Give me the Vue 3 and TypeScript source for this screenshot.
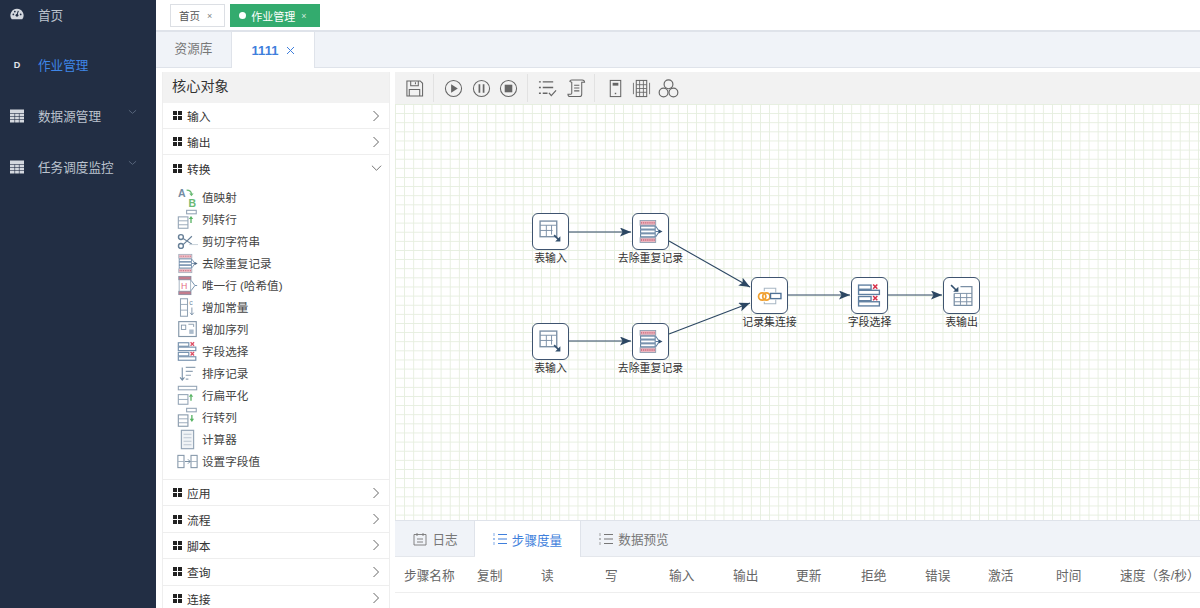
<script setup lang="ts">
interface Step {
  id: number;
  name: string;
  icon: string;
  x: number;
  y: number;
}

const paletteTop = ['输入', '输出'];
const paletteBottom = ['应用', '流程', '脚本', '查询', '连接'];

const transforms = [
  { name: '值映射', icon: 'i-map' },
  { name: '列转行', icon: 'i-col-row' },
  { name: '剪切字符串', icon: 'i-cut' },
  { name: '去除重复记录', icon: 'i-dedupe' },
  { name: '唯一行 (哈希值)', icon: 'i-hash' },
  { name: '增加常量', icon: 'i-const' },
  { name: '增加序列', icon: 'i-seq' },
  { name: '字段选择', icon: 'i-select' },
  { name: '排序记录', icon: 'i-sort' },
  { name: '行扁平化', icon: 'i-flat' },
  { name: '行转列', icon: 'i-row-col' },
  { name: '计算器', icon: 'i-calc' },
  { name: '设置字段值', icon: 'i-setval' }
];

// offsets are relative to the canvas
const steps: Step[] = [
  { id: 1, name: '表输入', icon: 'i-table-in', x: 137, y: 109 },
  { id: 2, name: '去除重复记录', icon: 'i-dedupe', x: 237, y: 109 },
  { id: 3, name: '表输入', icon: 'i-table-in', x: 137, y: 219 },
  { id: 4, name: '去除重复记录', icon: 'i-dedupe', x: 237, y: 219 },
  { id: 5, name: '记录集连接', icon: 'i-join', x: 356, y: 173 },
  { id: 6, name: '字段选择', icon: 'i-select', x: 456, y: 173 },
  { id: 7, name: '表输出', icon: 'i-table-out', x: 548, y: 173 }
];

const hops = [
  [174, 128, 236, 128],
  [174, 237, 236, 237],
  [274, 137, 355, 183],
  [274, 230, 355, 199],
  [393, 191, 455, 191],
  [493, 191, 547, 191]
];

const columns = ['步骤名称', '复制', '读', '写', '输入', '输出', '更新', '拒绝', '错误', '激活', '时间', '速度（条/秒）'];
</script>

<template>
  <div class="page">
    <svg class="defs" width="0" height="0" aria-hidden="true">
      <defs>
        <symbol id="i-map" viewBox="0 0 24 24">
          <text x="1" y="11" font-size="12" font-weight="700" font-family="Liberation Sans, sans-serif" fill="#5b7793">A</text>
          <text x="13" y="23" font-size="12" font-weight="700" font-family="Liberation Sans, sans-serif" fill="#4fae5c">B</text>
          <path d="M11 3.500c4 0 5.500 1.500 5.500 5" fill="none" stroke="#4fae5c" stroke-width="1.500" />
          <path d="M14 7.500h5l-2.500 3z" fill="#4fae5c" />
        </symbol>
        <symbol id="i-col-row" viewBox="0 0 24 24">
          <rect x="11" y="1.500" width="11" height="4" fill="none" stroke="#7f93a8" stroke-width="1.200" />
          <rect x="1.500" y="9" width="11" height="13" fill="none" stroke="#7f93a8" stroke-width="1.200" />
          <path d="M1.500 13.500h11M1.500 18h11" stroke="#7f93a8" />
          <path d="M16 16v-5" stroke="#3aa648" stroke-width="1.500" />
          <path d="M13.500 11.500L16 8l2.500 3.500z" fill="#3aa648" />
        </symbol>
        <symbol id="i-cut" viewBox="0 0 24 24">
          <circle cx="4.500" cy="7" r="2.800" fill="none" stroke="#4d6a86" stroke-width="1.600" />
          <circle cx="4.500" cy="17" r="2.800" fill="none" stroke="#4d6a86" stroke-width="1.600" />
          <path d="M7 8.500L17 15M7 15.500L17 6" stroke="#4d6a86" stroke-width="1.300" />
          <path d="M14 15.500h10" stroke="#b8c4cf" />
        </symbol>
        <symbol id="i-dedupe" viewBox="0 0 24 24">
          <rect x="2" y="1.500" width="15" height="4.500" fill="#eab8c1" stroke="#8a9aad" stroke-width="0.800" />
          <rect x="2" y="18" width="15" height="4.500" fill="#eab8c1" stroke="#8a9aad" stroke-width="0.800" />
          <path d="M3 3.700h13M3 20.200h13" stroke="#c4536a" stroke-width="1.300" stroke-dasharray="1 1" />
          <rect x="2.500" y="6.800" width="14" height="2.900" fill="#fff" stroke="#5d7d9f" />
          <rect x="2.500" y="10.500" width="14" height="2.900" fill="#fff" stroke="#5d7d9f" />
          <rect x="2.500" y="14.200" width="14" height="2.900" fill="#fff" stroke="#5d7d9f" />
          <path d="M17 7l3.500 5L17 17M17 12h4" fill="none" stroke="#5d7d9f" stroke-width="1" />
          <path d="M20 10l3.500 2-3.500 2z" fill="#33506e" />
        </symbol>
        <symbol id="i-hash" viewBox="0 0 24 24">
          <rect x="2" y="1.500" width="14" height="4" fill="#b9667a" stroke="#66788f" stroke-width="0.800" />
          <rect x="2" y="18.500" width="14" height="4" fill="#b9667a" stroke="#66788f" stroke-width="0.800" />
          <path d="M2.500 5.500v13M15.500 5.500v13" stroke="#8ea0b2" />
          <text x="4.500" y="16" font-size="10" font-family="Liberation Sans, sans-serif" fill="#e0566c">H</text>
          <path d="M16 6l4.500 6L16 18M20.500 12H23" fill="none" stroke="#4f7196" />
        </symbol>
        <symbol id="i-const" viewBox="0 0 24 24">
          <rect x="4" y="2" width="8" height="20" fill="none" stroke="#7f93a8" stroke-width="1.200" />
          <path d="M4 8.500h8M4 15h8" stroke="#7f93a8" />
          <text x="14" y="9" font-size="8" font-family="Liberation Sans, sans-serif" fill="#5b7793">c</text>
          <path d="M17 12v8M15 18l2 2.500 2-2.500" fill="none" stroke="#5b7793" />
        </symbol>
        <symbol id="i-seq" viewBox="0 0 24 24">
          <rect x="2" y="3" width="20" height="17" fill="none" stroke="#6e849a" stroke-width="1.300" />
          <rect x="5" y="7" width="5" height="5" fill="none" stroke="#6e849a" />
          <rect x="14" y="12" width="5" height="5" fill="#9db0c2" />
          <path d="M13 6h6v3" fill="none" stroke="#6e849a" />
        </symbol>
        <symbol id="i-select" viewBox="0 0 24 24">
          <rect x="1.500" y="2" width="12" height="4" fill="#fff" stroke="#5d7d9f" stroke-width="1.300" />
          <rect x="1.500" y="7" width="20" height="4" fill="#fff" stroke="#5d7d9f" stroke-width="1.300" />
          <rect x="1.500" y="13" width="12" height="4" fill="#fff" stroke="#5d7d9f" stroke-width="1.300" />
          <rect x="1.500" y="18" width="20" height="4" fill="#fff" stroke="#5d7d9f" stroke-width="1.300" />
          <path d="M15.500 1.500l4 4M19.500 1.500l-4 4M15.500 12.500l4 4M19.500 12.500l-4 4" stroke="#d8304a" stroke-width="1.500" />
        </symbol>
        <symbol id="i-sort" viewBox="0 0 24 24">
          <path d="M6 5v14M3.500 16.500L6 19.500l2.500-3" fill="none" stroke="#5b7793" stroke-width="1.200" />
          <path d="M10 5h11M10 9.500h8M10 14h6M10 18.500h3" stroke="#7f93a8" stroke-width="1.300" />
        </symbol>
        <symbol id="i-flat" viewBox="0 0 24 24">
          <rect x="1.500" y="1.500" width="21" height="4" fill="none" stroke="#7f93a8" stroke-width="1.200" />
          <rect x="1.500" y="11" width="11" height="11" fill="none" stroke="#7f93a8" stroke-width="1.200" />
          <path d="M1.500 16.500h11" stroke="#7f93a8" />
          <path d="M16 18v-5" stroke="#3aa648" stroke-width="1.500" />
          <path d="M13.500 13.500L16 10l2.500 3.500z" fill="#3aa648" />
        </symbol>
        <symbol id="i-row-col" viewBox="0 0 24 24">
          <rect x="11" y="1.500" width="11" height="4" fill="none" stroke="#7f93a8" stroke-width="1.200" />
          <rect x="1.500" y="9" width="11" height="13" fill="none" stroke="#6e849a" stroke-width="1.200" />
          <path d="M1.500 13.500h11M1.500 18h11" stroke="#7f93a8" />
          <path d="M17 9v5" stroke="#3aa648" stroke-width="1.500" />
          <path d="M14.500 13.500L17 17l2.500-3.500z" fill="#3aa648" />
        </symbol>
        <symbol id="i-calc" viewBox="0 0 24 24">
          <rect x="5" y="1.500" width="14" height="21" fill="#eef1f5" stroke="#7f93a8" stroke-width="1.300" />
          <path d="M7.500 6h9M7.500 10h9M7.500 14h9M7.500 18h9" stroke="#a8b6c4" />
        </symbol>
        <symbol id="i-setval" viewBox="0 0 24 24">
          <rect x="1" y="5" width="7" height="14" fill="none" stroke="#6e849a" stroke-width="1.200" />
          <rect x="16" y="5" width="7" height="14" fill="none" stroke="#6e849a" stroke-width="1.200" />
          <path d="M1 12h7M16 12h7" stroke="#8ea0b2" />
          <path d="M9 12h6M12.500 9.500L15 12l-2.500 2.500" fill="none" stroke="#4d6a86" />
        </symbol>
        <symbol id="i-table-in" viewBox="0 0 24 24">
          <rect x="2" y="2" width="16" height="15" fill="#fff" stroke="#7a8fa5" stroke-width="1.300" />
          <path d="M2 6h16M2 11h12M8 6v11M13 6v9" stroke="#7a8fa5" stroke-width="0.900" />
          <path d="M15.500 15.500l4.500 4.500" stroke="#33506e" stroke-width="1.500" />
          <path d="M21.500 16.500v5h-5z" fill="#33506e" />
        </symbol>
        <symbol id="i-table-out" viewBox="0 0 24 24">
          <path d="M11 3.500h11v18H5V10" fill="#fff" stroke="#7a8fa5" stroke-width="1.200" />
          <path d="M5 10h17M5 14h17M5 18h17M11 10v11M17 10v11" stroke="#7a8fa5" stroke-width="0.900" />
          <path d="M2 2l5 5" stroke="#33506e" stroke-width="1.500" />
          <path d="M9 3.500v5H4z" fill="#33506e" />
        </symbol>
        <symbol id="i-join" viewBox="0 0 24 24">
          <circle cx="5" cy="13" r="3.500" fill="none" stroke="#f0a030" stroke-width="1.700" />
          <circle cx="9" cy="13" r="3.500" fill="none" stroke="#f0a030" stroke-width="1.700" />
          <path d="M7 8V5h11v4M7 18v2h11v-4" fill="none" stroke="#a8b6c4" />
          <rect x="13" y="10" width="10" height="5" fill="#fff" stroke="#4f7196" stroke-width="1.300" />
        </symbol>
        <marker id="hop-arrow" markerWidth="12" markerHeight="10" refX="11" refY="4.500" orient="auto" markerUnits="userSpaceOnUse">
          <path d="M0 0L11 4.500L0 9L2.500 4.500z" fill="#2c4763" />
        </marker>
      </defs>
    </svg>

    <aside class="sidebar">
      <div class="nav-item">
        <svg class="nav-icon" viewBox="0 0 16 14">
          <path d="M8 1a7.500 7.500 0 0 0-6 12h12A7.500 7.500 0 0 0 8 1z" fill="#d4d8df" />
          <circle cx="8" cy="8.500" r="1.600" fill="#222e44" />
          <path d="M8 8l1.500-4.500" stroke="#222e44" stroke-width="1.200" />
          <circle cx="3.800" cy="7.500" r="1" fill="#222e44" />
          <circle cx="5.500" cy="4.200" r="1" fill="#222e44" />
          <circle cx="12.200" cy="7.500" r="1" fill="#222e44" />
        </svg>
        <span>首页</span>
      </div>
      <div class="nav-item active">
        <span class="nav-letter">D</span>
        <span>作业管理</span>
      </div>
      <div class="nav-item">
        <svg class="nav-icon" viewBox="0 0 14 14">
          <path d="M0 0.500h14v13H0z" fill="#d4d8df" />
          <path d="M0 4.500h14M0 7.500h14M0 10.500h14M4.700 4.500V14M9.300 4.500V14" stroke="#222e44" stroke-width="0.600" />
        </svg>
        <span>数据源管理</span>
        <svg class="nav-caret" viewBox="0 0 10 6"><path d="M1 1l4 3.500L9 1" /></svg>
      </div>
      <div class="nav-item">
        <svg class="nav-icon" viewBox="0 0 14 14">
          <path d="M0 0.500h14v13H0z" fill="#d4d8df" />
          <path d="M0 4.500h14M0 7.500h14M0 10.500h14M4.700 4.500V14M9.300 4.500V14" stroke="#222e44" stroke-width="0.600" />
        </svg>
        <span>任务调度监控</span>
        <svg class="nav-caret" viewBox="0 0 10 6"><path d="M1 1l4 3.500L9 1" /></svg>
      </div>
    </aside>

    <main class="main">
      <div class="tags">
        <div class="tag">首页<span class="tag-x">×</span></div>
        <div class="tag tag-on"><i class="tag-dot"></i>作业管理<span class="tag-x">×</span></div>
      </div>

      <div class="tabs">
        <div class="tab">资源库</div>
        <div class="tab tab-on">
          1111
          <svg class="tab-x" viewBox="0 0 9 9"><path d="M1 1l7 7M8 1L1 8" /></svg>
        </div>
      </div>

      <div class="workspace">
        <section class="palette">
          <h3 class="palette-head">核心对象</h3>
          <div v-for="g in paletteTop" :key="g" class="group">
            <svg class="grip" viewBox="0 0 9 9"><path d="M0 0h4v4H0zM5 0h4v4H5zM0 5h4v4H0zM5 5h4v4H5z" /></svg>
            <span>{{ g }}</span>
            <svg class="chev" viewBox="0 0 8 12"><path d="M1.500 1l5 5-5 5" /></svg>
          </div>
          <div class="group group-open">
            <svg class="grip" viewBox="0 0 9 9"><path d="M0 0h4v4H0zM5 0h4v4H5zM0 5h4v4H0zM5 5h4v4H5z" /></svg>
            <span>转换</span>
            <svg class="chev-down" viewBox="0 0 12 8"><path d="M1 1.500l5 5 5-5" /></svg>
          </div>
          <ul class="items">
            <li v-for="t in transforms" :key="t.name" class="item">
              <svg class="item-icon"><use :href="`#${t.icon}`" /></svg>
              <span>{{ t.name }}</span>
            </li>
          </ul>
          <div v-for="g in paletteBottom" :key="g" class="group group-low">
            <svg class="grip" viewBox="0 0 9 9"><path d="M0 0h4v4H0zM5 0h4v4H5zM0 5h4v4H0zM5 5h4v4H5z" /></svg>
            <span>{{ g }}</span>
            <svg class="chev" viewBox="0 0 8 12"><path d="M1.500 1l5 5-5 5" /></svg>
          </div>
        </section>

        <section class="editor">
          <div class="toolbar">
            <div class="tool-group tg-save">
              <svg class="tool" viewBox="0 0 20 20">
                <path d="M2 2h14l2.500 2.500V18H2z" />
                <path d="M6 2v5h8V2M4.500 18v-7h11v7M11 3.500v2" />
              </svg>
            </div>
            <div class="tool-group tg-run">
              <svg class="tool" viewBox="0 0 20 20"><circle cx="10" cy="10" r="8.500" /><path class="fill" d="M7.500 5.500l7 4.500-7 4.500z" /></svg>
              <svg class="tool" viewBox="0 0 20 20"><circle cx="10" cy="10" r="8.500" /><path d="M7.800 5.500v9M12.200 5.500v9" stroke-width="1.800" /></svg>
              <svg class="tool" viewBox="0 0 20 20"><circle cx="10" cy="10" r="8.500" /><path class="fill" d="M6 6h8v8H6z" /></svg>
            </div>
            <div class="tool-group tg-check">
              <svg class="tool" viewBox="0 0 20 20">
                <path d="M1 3h2M5 3h11M1 9h2M5 9h11M1 15h2M5 15h5" stroke-width="1.500" />
                <path d="M11.500 14.500l2.500 3 5-5.500" stroke-width="1.300" />
              </svg>
              <svg class="tool" viewBox="0 0 20 20">
                <path d="M3 2.500c0-1 1-1.500 2-1.500h11c1.500 0 2.500 1 2.500 2.500h-3V16c0 1.500-1 2.500-2.500 2.500H3.500C2 18.500 1 17.500 1 16h3c.5 0 1-.5 1-1V3.500z" />
                <path d="M7.500 6.500h5.500M7.500 9.500h5.500M7.500 12.500h5.500" />
              </svg>
            </div>
            <div class="tool-group tg-misc">
              <svg class="tool" viewBox="0 0 20 20">
                <rect x="4.500" y="1.500" width="11" height="17" />
                <path class="fill" d="M7 4h6v3H7z" />
                <path d="M10 14.500v1.500" stroke-width="1.500" />
              </svg>
              <svg class="tool" viewBox="0 0 20 20">
                <rect x="4.500" y="1.500" width="11" height="17" />
                <path d="M1.500 4v12M18.500 4v12M8 1.500v17M12 1.500v17M4.500 6h11M4.500 10h11M4.500 14h11" stroke-width="0.900" />
              </svg>
              <svg class="tool tool-wide" viewBox="0 0 20 20">
                <circle cx="10" cy="6" r="4.200" />
                <circle cx="5.300" cy="13.800" r="4.200" />
                <circle cx="14.700" cy="13.800" r="4.200" />
              </svg>
            </div>
          </div>

          <div class="canvas">
            <svg class="hops">
              <line
                v-for="(h, i) in hops"
                :key="i"
                :x1="h[0]"
                :y1="h[1]"
                :x2="h[2]"
                :y2="h[3]"
                stroke="#2c4763"
                stroke-width="1.100"
                marker-end="url(#hop-arrow)"
              />
            </svg>
            <div
              v-for="s in steps"
              :key="s.id"
              class="step"
              :style="{ left: `${s.x}px`, top: `${s.y}px` }"
            >
              <div class="step-box"><svg class="step-icon"><use :href="`#${s.icon}`" /></svg></div>
              <div class="step-name">{{ s.name }}</div>
            </div>
          </div>

          <div class="bottom">
            <div class="bottom-tabs">
              <div class="btab btab-log">
                <svg class="btab-icon" viewBox="0 0 14 14">
                  <path d="M1 2.500h12v10.500H1zM4 1v3M10 1v3M4 7h6M4 10h6" fill="none" stroke="currentColor" stroke-width="0.900" />
                </svg>
                日志
              </div>
              <div class="btab btab-on">
                <svg class="btab-icon" viewBox="0 0 14 14">
                  <path d="M5 2.500h9M5 7h9M5 11.500h9" fill="none" stroke="currentColor" stroke-width="1.100" />
                  <path d="M1 1.500v2M1 6v2M1 10.500v2" fill="none" stroke="currentColor" stroke-width="1.300" stroke-dasharray="0.800 0.500" />
                </svg>
                步骤度量
              </div>
              <div class="btab">
                <svg class="btab-icon" viewBox="0 0 14 14">
                  <path d="M5 2.500h9M5 7h9M5 11.500h9" fill="none" stroke="currentColor" stroke-width="1.100" />
                  <path d="M1 1.500v2M1 6v2M1 10.500v2" fill="none" stroke="currentColor" stroke-width="1.300" stroke-dasharray="0.800 0.500" />
                </svg>
                数据预览
              </div>
            </div>
            <div class="metrics">
              <div v-for="c in columns" :key="c" class="metric">{{ c }}</div>
            </div>
          </div>
        </section>
      </div>
    </main>
  </div>
</template>

<style>
html,
body {
  margin: 0;
  overflow: hidden;
}
</style>

<style scoped>
.page {
  display: flex;
  width: 1200px;
  height: 608px;
  overflow: hidden;
  background: #fff;
  font-family: "Liberation Sans", "Noto Sans CJK SC", sans-serif;
  color: #333;
}

.defs {
  position: absolute;
}

/* sidebar */
.sidebar {
  flex: none;
  width: 156px;
  background: #222e44;
  color: #bcc3ce;
  font-size: 12.6px;
}

.nav-item {
  display: flex;
  align-items: center;
  height: 51px;
  padding-left: 10px;
  position: relative;
}

.nav-item:first-child {
  height: 28px;
  margin-bottom: 11px;
}

.nav-item.active {
  color: #3f86e8;
}

.nav-icon {
  width: 14px;
  height: 14px;
  margin-right: 14px;
}

.nav-letter {
  width: 14px;
  margin-right: 14px;
  font-size: 9px;
  font-weight: 700;
  color: #e4e7ec;
  text-align: center;
}

.nav-caret {
  position: absolute;
  left: 128px;
  top: 19px;
  width: 9px;
  height: 6px;
  fill: none;
  stroke: #5c6a80;
}

/* tag bar */
.main {
  flex: 1;
  min-width: 0;
  display: flex;
  flex-direction: column;
}

.tags {
  flex: none;
  display: flex;
  gap: 5px;
  height: 32px;
  padding: 4px 0 0 14px;
  box-sizing: border-box;
  border-bottom: 2px solid #dfe3ea;
}

.tag {
  height: 23px;
  box-sizing: border-box;
  display: flex;
  align-items: center;
  padding: 0 12px 0 8px;
  border: 1px solid #dcdfe4;
  font-size: 10.5px;
  color: #555;
}

.tag-on {
  padding-right: 12px;
  background: #33ab6e;
  border-color: #33ab6e;
  color: #fff;
  font-size: 11px;
}

.tag-dot {
  width: 7px;
  height: 7px;
  border-radius: 50%;
  background: #fff;
  margin-right: 5px;
}

.tag-x {
  margin-left: 7px;
  font-size: 9px;
  opacity: 0.75;
}

.tag-on .tag-x {
  margin-left: 6px;
}

/* page tabs */
.tabs {
  flex: none;
  display: flex;
  height: 36px;
  background: #f0f3f8;
  border-bottom: 1px solid #dfe3ea;
  box-sizing: border-box;
}

.tab {
  width: 75px;
  line-height: 35px;
  text-align: center;
  font-size: 12.6px;
  color: #777;
  border-right: 1px solid #dfe3ea;
}

.tab-on {
  display: flex;
  align-items: center;
  justify-content: center;
  gap: 8px;
  width: 83px;
  height: 36px;
  box-sizing: border-box;
  padding-left: 1px;
  background: #fff;
  color: #3f7fdc;
  font-weight: 700;
  font-size: 13px;
}

.tab-x {
  width: 9px;
  height: 9px;
  fill: none;
  stroke: #3f7fdc;
  stroke-width: 1;
}

/* workspace */
.workspace {
  flex: 1;
  min-height: 0;
  display: flex;
  gap: 5px;
  padding: 4px 0 0 6px;
  overflow: hidden;
}

.palette {
  flex: none;
  width: 228px;
  border-left: 1px solid #eee;
  border-right: 1px solid #eee;
  box-sizing: border-box;
}

.palette-head {
  margin: 0;
  height: 31px;
  line-height: 29px;
  padding-left: 9px;
  font-size: 14.2px;
  font-weight: 400;
  color: #333;
  background: #f2f2f2;
}

.group {
  display: flex;
  align-items: center;
  height: 26px;
  padding-left: 10px;
  font-size: 11.8px;
  color: #333;
  border-bottom: 1px solid #eee;
  box-sizing: border-box;
}

.group-low {
  height: 26.4px;
}

.group-open {
  border-bottom: 0;
}

.grip {
  width: 9px;
  height: 9px;
  margin-right: 5px;
  fill: #222;
}

.chev,
.chev-down {
  margin-left: auto;
  fill: none;
  stroke: #666;
}

.chev {
  width: 8px;
  height: 12px;
  margin-right: 9px;
}

.chev-down {
  width: 11px;
  height: 8px;
  margin-right: 7px;
}

.items {
  list-style: none;
  margin: 0;
  padding: 5px 0 7px 14px;
  border-bottom: 1px solid #eee;
}

.item {
  display: flex;
  align-items: center;
  height: 22px;
  font-size: 11.6px;
  color: #444;
}

.item-icon {
  flex: none;
  width: 21px;
  height: 21px;
  margin-right: 4px;
  opacity: 0.85;
}

/* editor */
.editor {
  flex: 1;
  min-width: 0;
  display: flex;
  flex-direction: column;
}

.toolbar {
  flex: none;
  display: flex;
  height: 32px;
  background: #f2f2f2;
}

.tool-group {
  display: flex;
  align-items: center;
  height: 28px;
  margin-top: 2px;
  border-right: 1px solid #e2e2e2;
  box-sizing: border-box;
}

.tg-save {
  width: 39px;
  padding-left: 10px;
}

.tg-run {
  width: 94px;
  padding-left: 10px;
  gap: 8.500px;
}

.tg-check {
  width: 67px;
  padding-left: 10px;
  gap: 10px;
}

.tg-misc {
  padding-left: 11px;
  gap: 7px;
  border-right: 0;
}

.tool {
  width: 19px;
  height: 19px;
  fill: none;
  stroke: #666;
  stroke-width: 1.100;
}

.tool-wide {
  width: 21px;
  height: 21px;
}

.tool .fill {
  fill: #666;
  stroke: none;
}

.canvas {
  flex: none;
  height: 416px;
  position: relative;
  overflow: hidden;
  background-color: #fff;
  background-image:
    linear-gradient(#e6eedf 1px, transparent 1px),
    linear-gradient(90deg, #e6eedf 1px, transparent 1px);
  background-size: 9.13px 9.13px;
}

.hops {
  position: absolute;
  left: 0;
  top: 0;
  width: 100%;
  height: 100%;
}

.step {
  position: absolute;
  width: 37px;
}

.step-box {
  width: 37px;
  height: 37px;
  box-sizing: border-box;
  display: flex;
  align-items: center;
  justify-content: center;
  background: #fff;
  border: 1.300px solid #3f5470;
  border-radius: 6px;
}

.step-icon {
  width: 25px;
  height: 25px;
}

.step-name {
  position: absolute;
  left: 50%;
  top: 38px;
  transform: translateX(-50%);
  white-space: nowrap;
  font-size: 10.900px;
  line-height: 15px;
  color: #333;
}

/* bottom panel */
.bottom {
  flex: 1;
  border-top: 1px solid #dfe3ea;
  min-height: 0;
}

.bottom-tabs {
  display: flex;
  height: 36px;
  box-sizing: border-box;
  background: #f0f3f8;
  border-bottom: 1px solid #e4e7ec;
}

.btab {
  display: flex;
  align-items: center;
  justify-content: center;
  gap: 5px;
  width: 106px;
  height: 35px;
  font-size: 12.6px;
  color: #777;
}

.btab-log {
  width: 80px;
  padding-left: 2px;
  border-right: 1px solid #dfe3ea;
  box-sizing: border-box;
}

.btab-on {
  height: 36px;
  background: #fff;
  color: #3f7fdc;
  border-right: 1px solid #dfe3ea;
  box-sizing: border-box;
}

.btab-icon {
  width: 14px;
  height: 14px;
}

.metrics {
  display: grid;
  grid-template-columns: 73px repeat(4, 64px) 63px 65px 64px 63px 68px 64px 1fr;
  align-items: center;
  height: 36px;
  padding-left: 9px;
  border-bottom: 1px solid #eee;
  box-sizing: border-box;
}

.metric {
  font-size: 12.7px;
  color: #666;
  white-space: nowrap;
}
</style>
